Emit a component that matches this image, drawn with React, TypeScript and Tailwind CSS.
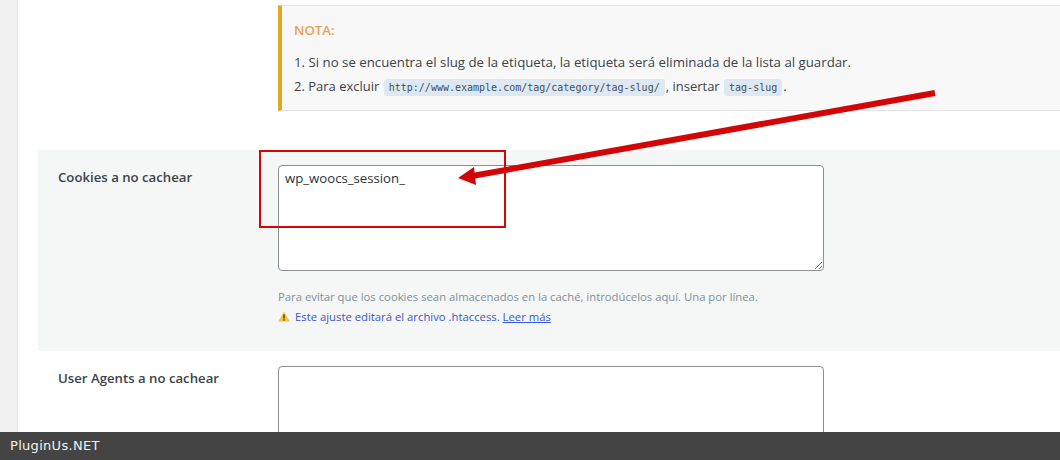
const font = "font-['Open_Sans',sans-serif]";

const Code = ({ children }: { children: string }) => (
  <code className="mx-[1px] rounded-[3px] bg-[#dde8f3] px-[5px] py-[3px] font-['DejaVu_Sans_Mono',monospace] text-[10px] text-[#40505f]">
    {children}
  </code>
);

const Warning = () => (
  <svg className="mr-[5px] inline-block align-[-1px]" width="12" height="11" viewBox="0 0 12 11">
    <path d="M6 0.5 L11.8 10.6 H0.2 Z" fill="#f5c542" />
    <rect x="5.3" y="3.5" width="1.4" height="4" fill="#4a3a10" />
    <rect x="5.3" y="8.2" width="1.4" height="1.4" fill="#4a3a10" />
  </svg>
);

const Field = ({ label, value, shaded, children }: { label: string; value?: string; shaded?: boolean; children?: React.ReactNode }) => (
  <div className={`ml-5 grid grid-cols-[220px_1fr] px-5 pt-[15px] ${shaded ? "bg-[#f5f7f7] h-[201px]" : "h-[200px]"}`}>
    <div className="pt-[3px] text-[13.2px] font-semibold leading-[18px] text-[#3c434a]">{label}</div>
    <div>
      <textarea
        readOnly
        defaultValue={value}
        className="block h-[106px] w-[546px] rounded-[4px] border border-[#8c8f94] bg-white px-[6px] py-[1px] text-[13.2px] leading-[22px] text-[#2c3338] outline-none"
      />
      {children}
    </div>
  </div>
);

const App = () => {
  return (
    <div className={`relative flex h-[460px] w-[1060px] overflow-hidden bg-[#f0f0f1] ${font}`}>
      <div className="w-[17px] shrink-0" />
      <div className="flex-1 border-l border-[#e8e8e8] bg-white pt-[5px]">
        <div className="ml-[260px] h-[106px] border-y border-l-4 border-y-[#e5e5e5] border-l-[#e2a81e] bg-[#f8f8f8] pl-3 pt-[15px] text-[13.25px] text-[#3c434a]">
          <div className="text-[13.25px] font-semibold leading-[18px] text-[#eb9f58]">NOTA:</div>
          <p className="mt-[11px] leading-[25px]">1. Si no se encuentra el slug de la etiqueta, la etiqueta será eliminada de la lista al guardar.</p>
          <p className="text-[13px] leading-[22px]">
            2. Para excluir <Code>http://www.example.com/tag/category/tag-slug/</Code>, insertar <Code>tag-slug</Code>.
          </p>
        </div>
        <div className="h-[39px]" />
        <Field label="Cookies a no cachear" value="wp_woocs_session_" shaded>
          <p className="mt-[16px] text-[11.3px] leading-[20px] text-[#7d8f9b]">Para evitar que los cookies sean almacenados en la caché, introdúcelos aquí. Una por línea.</p>
          <p className="text-[11.3px] leading-[20px] text-[#3a55c8]">
            <Warning />Este ajuste editará el archivo .htaccess. <a className="text-[#3858e9] underline">Leer más</a>
          </p>
        </Field>
        <Field label="User Agents a no cachear" />
      </div>

      <div className="absolute left-[259px] top-[150px] h-[78px] w-[247px] border-2 border-[#d20606]" />
      <svg className="absolute inset-0" width="1060" height="460">
        <line x1="935" y1="93" x2="472" y2="176" stroke="#d20606" strokeWidth="6" />
        <polygon points="458,178 474,167 476,185" fill="#d20606" />
      </svg>

      <div className="absolute bottom-0 left-0 flex h-7 w-full items-center bg-[#444444] pl-[10px] font-['DejaVu_Sans',sans-serif] text-[13px] tracking-[0.3px] text-[#f2f2f2]">
        PluginUs.NET
      </div>
    </div>
  );
};

export default App;
